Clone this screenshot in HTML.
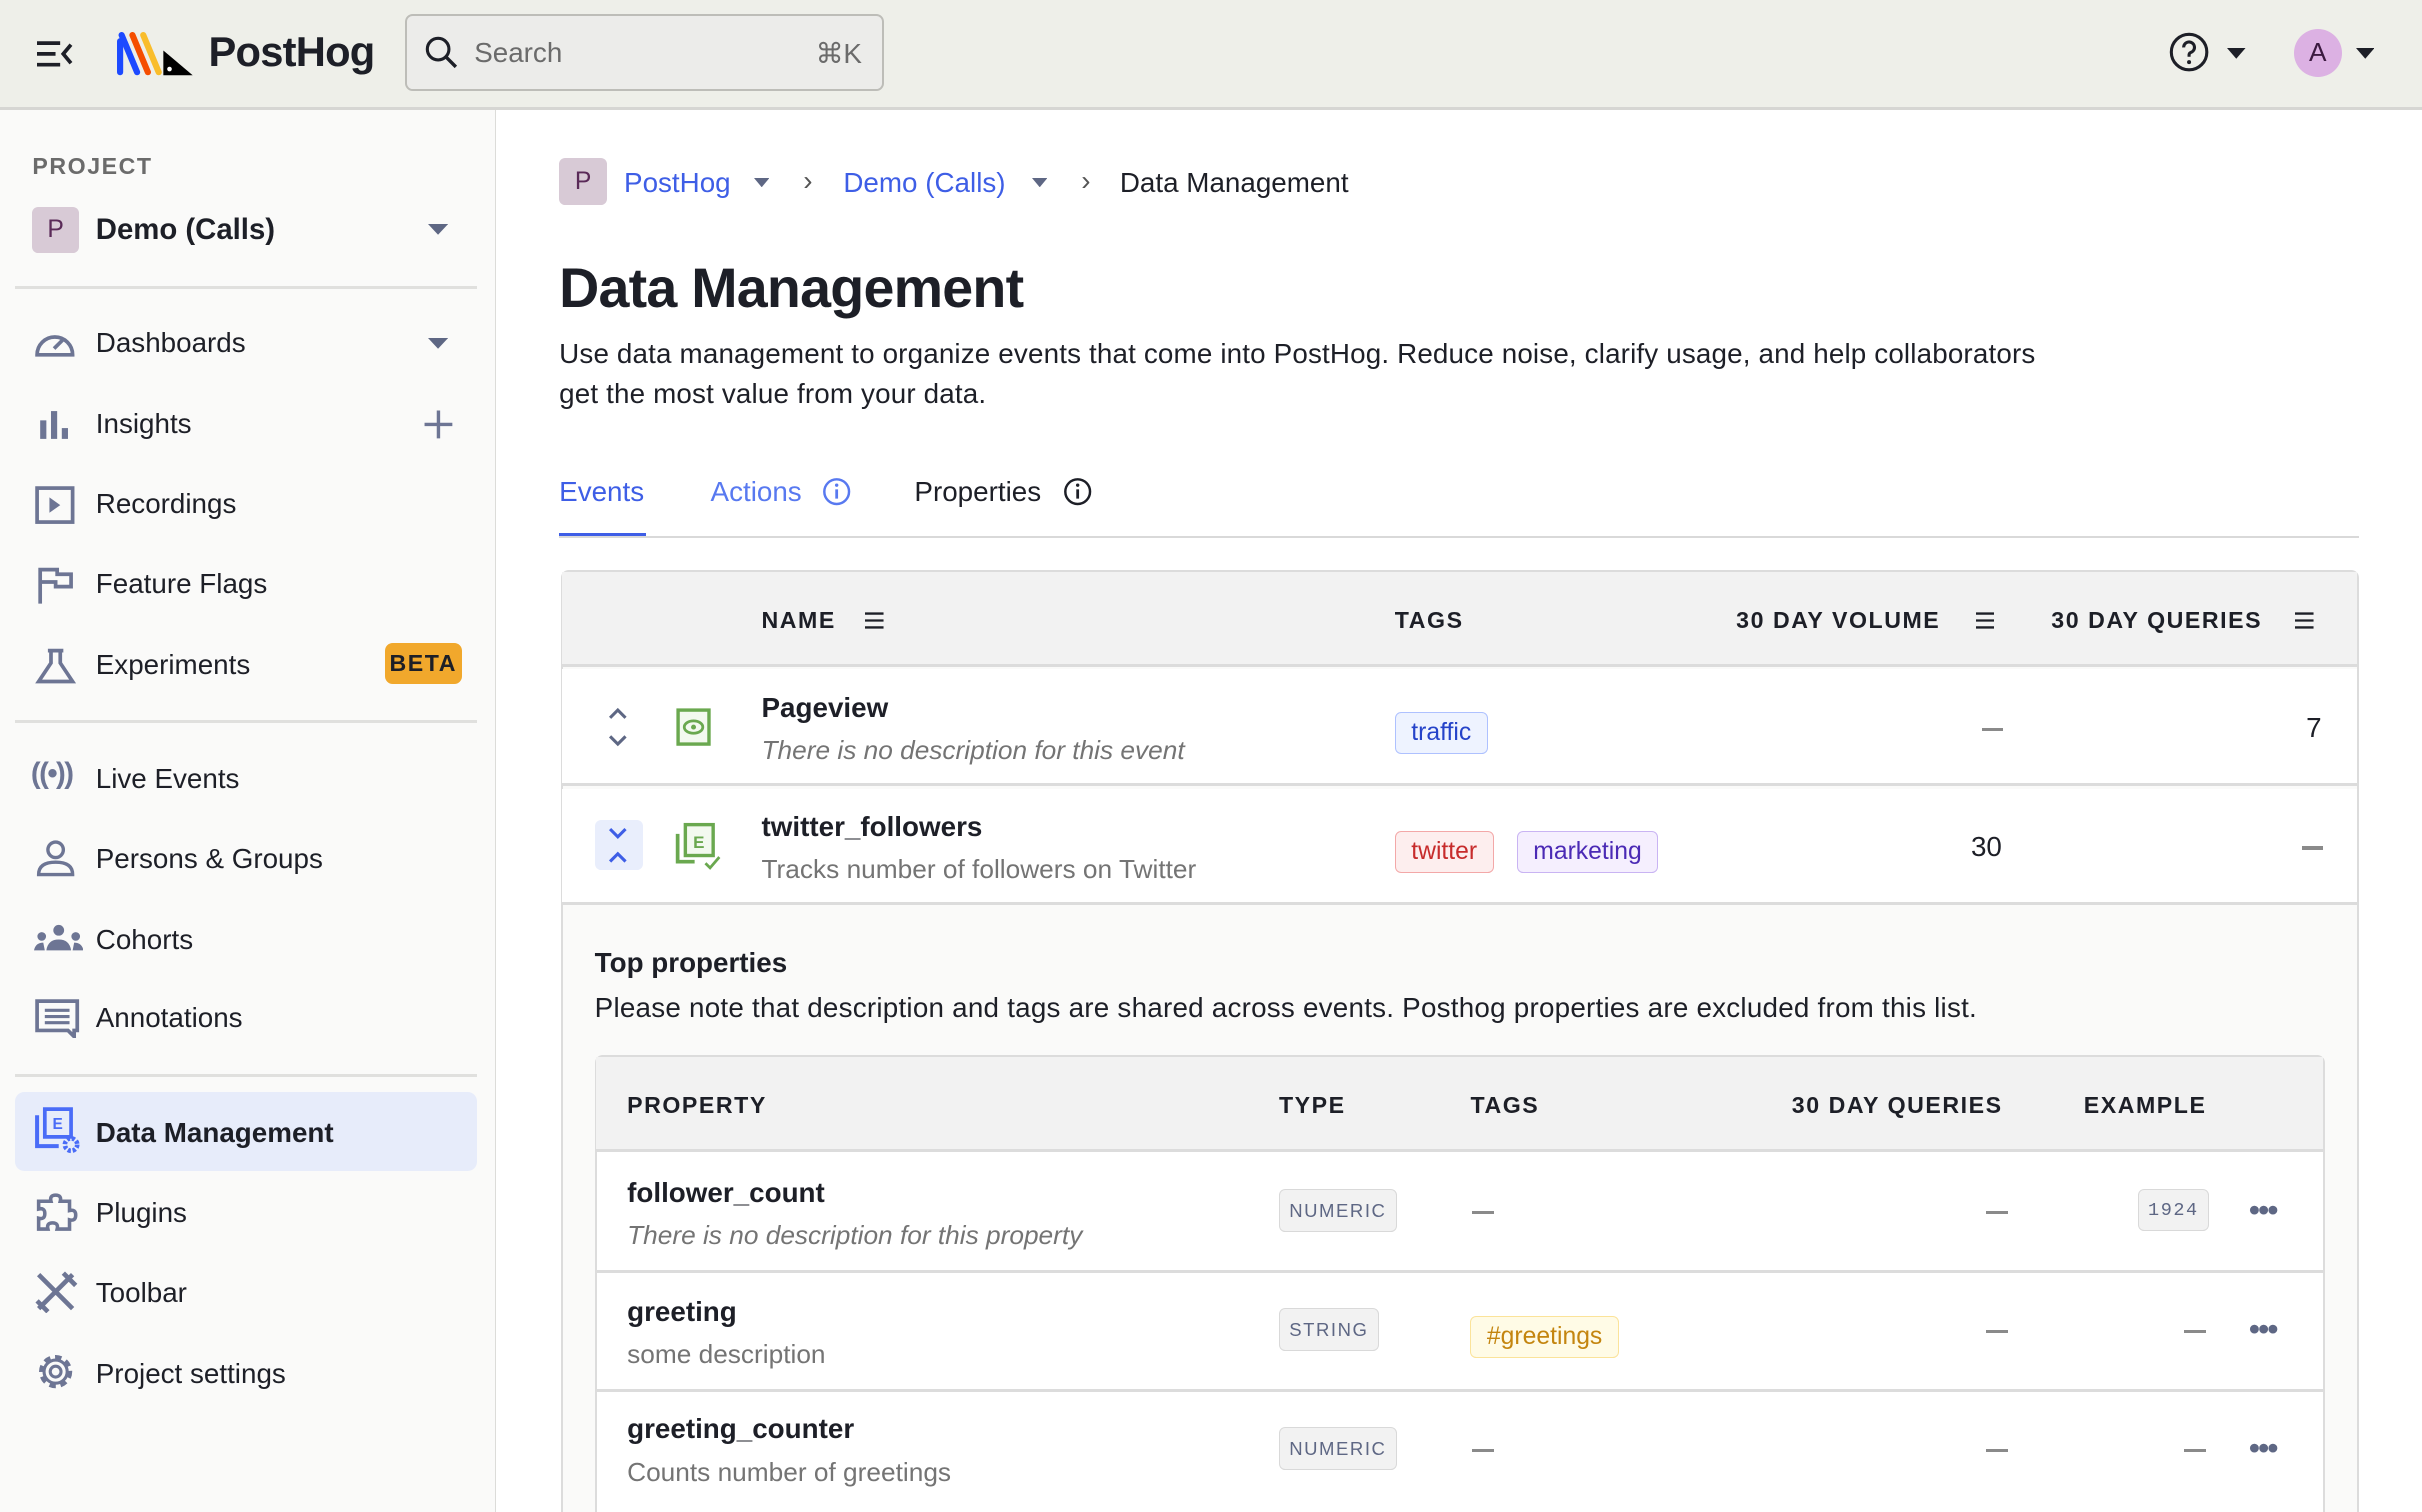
<!DOCTYPE html>
<html><head><meta charset="utf-8"><style>
*{box-sizing:border-box;margin:0;padding:0}
html,body{width:2422px;height:1512px;overflow:hidden;background:#fff}
#r{position:absolute;left:0;top:0;width:1568px;height:979px;zoom:1.54464;font-family:"Liberation Sans",sans-serif;color:#1d1f27;overflow:hidden}
.a{position:absolute}
.top{left:0;top:0;width:1568px;height:71px;background:#eeefe9;border-bottom:2px solid #d6d6d3}
.side{left:0;top:71px;width:321px;height:908px;background:#fafaf9;border-right:1px solid #dcdcd9}
.nav{position:absolute;left:62px;font-size:18px;color:#1d1f27}
.ic{position:absolute;left:22px}
.hr{position:absolute;left:10px;width:299px;height:2px;background:#e0e0de}
.hd{font-size:15px;font-weight:bold;letter-spacing:1px;color:#1d1f27}
.tag{position:absolute;font-size:16px;padding:4px 10px;border-radius:4px;border:1px solid}
.mut{color:#747474}
.pill{position:absolute;font-size:12px;letter-spacing:1px;padding:6px 6px;border-radius:4px;border:1px solid #d9d9d9;background:#f2f2f2;color:#5e6784}
.dash{position:absolute;width:14px;height:2px;background:#8a8a8a}
.dots{position:absolute;font-size:20px;color:#5e6784;letter-spacing:-1px;font-weight:bold}
</style></head><body><div id="r">
<div class="a top"></div>
<svg class="a" style="left:24px;top:26px" width="24" height="18" viewBox="0 0 24 18"><path d="M0 2H15M0 9H12M0 16H15M22 3L17 9L22 15" stroke="#1d1f27" stroke-width="2.4" fill="none"/></svg>
<svg class="a" style="left:76px;top:21px" width="50" height="28" viewBox="0 0 50 28"><g stroke-width="4" stroke-linecap="round"><path d="M2 6L2 26" stroke="#1d4aff"/><path d="M3 2L13 26" stroke="#1d4aff"/><path d="M10 2L20 26" stroke="#f54e00"/><path d="M17 2L27 26" stroke="#f9bd2b"/></g><polygon points="30,12 30,28 49,28 36,17" fill="#000"/><circle cx="34" cy="24" r="1.5" fill="#fff"/></svg>
<div class="a" style="left:135px;top:18px;font-size:27px;font-weight:bold;letter-spacing:-0.5px">PostHog</div>
<div class="a" style="left:262px;top:9px;width:310px;height:50px;border:1.5px solid #bdbdb8;border-radius:5px;background:#ececea"></div>
<svg class="a" style="left:275px;top:23px" width="22" height="22" viewBox="0 0 22 22"><circle cx="8.5" cy="8.5" r="7" stroke="#1d1f27" stroke-width="2" fill="none"/><path d="M13.5 13.5L20 20" stroke="#1d1f27" stroke-width="2.2"/></svg>
<div class="a" style="left:307px;top:24px;font-size:18px;color:#6b6b6b">Search</div>
<div class="a" style="left:528px;top:24px;font-size:18px;color:#6b6b6b">⌘K</div>
<svg class="a" style="left:1404px;top:21px" width="28" height="28" viewBox="0 0 28 28"><circle cx="13" cy="13" r="11.5" stroke="#1d1f27" stroke-width="2" fill="none"/><path d="M9.5 10a3.5 3.5 0 1 1 4.5 3.3c-.8.3-1 .8-1 1.7v1" stroke="#1d1f27" stroke-width="2" fill="none"/><circle cx="13" cy="19.5" r="1.3" fill="#1d1f27"/></svg>
<svg class="a" style="left:1442px;top:31px" width="12" height="8"><path d="M0 0H12L6 7Z" fill="#1d1f27"/></svg>
<div class="a" style="left:1485px;top:19px;width:31px;height:31px;border-radius:50%;background:#dcb1e3;font-size:17px;text-align:center;line-height:31px;color:#3b1a40">A</div>
<svg class="a" style="left:1525px;top:31px" width="12" height="8"><path d="M0 0H12L6 7Z" fill="#1d1f27"/></svg>

<div class="a side"></div>
<div class="a" style="left:21px;top:99px;font-size:15px;letter-spacing:1px;color:#6b6b6b;font-weight:bold">PROJECT</div>
<div class="a" style="left:21px;top:134px;width:30px;height:30px;border-radius:4px;background:#d8cad6;color:#5a2a58;text-align:center;line-height:30px;font-size:16px">P</div>
<div class="a" style="left:62px;top:138px;font-size:19px;font-weight:bold">Demo (Calls)</div>
<svg class="a" style="left:277px;top:145px" width="13" height="8"><path d="M0 0H13L6.5 7Z" fill="#5e6784"/></svg>
<div class="hr" style="top:185px"></div>
<svg class="ic" style="top:212px" width="28" height="22" viewBox="0 0 28 22"><path d="M2 18A11 11 0 1 1 25 18Z" stroke="#6d7594" stroke-width="2.4" fill="none"/><path d="M13 14L19 8" stroke="#6d7594" stroke-width="2.4"/></svg>
<div class="nav" style="top:212px">Dashboards</div>
<svg class="a" style="left:277px;top:219px" width="13" height="8"><path d="M0 0H13L6.5 7Z" fill="#5e6784"/></svg>
<svg class="ic" style="top:264px" width="28" height="22"><rect x="4" y="8" width="4" height="12" fill="#6d7594"/><rect x="11" y="2" width="4" height="18" fill="#6d7594"/><rect x="18" y="13" width="4" height="7" fill="#6d7594"/></svg>
<div class="nav" style="top:264px">Insights</div>
<svg class="a" style="left:274px;top:265px" width="20" height="20"><path d="M10 1V19M1 10H19" stroke="#6d7594" stroke-width="2.2"/></svg>
<svg class="ic" style="top:314px" width="28" height="26"><rect x="2" y="2" width="23" height="22" stroke="#6d7594" stroke-width="2.4" fill="none"/><path d="M10 8L17 13L10 18Z" fill="#6d7594"/></svg>
<div class="nav" style="top:316px">Recordings</div>
<svg class="ic" style="top:366px" width="28" height="26"><path d="M4 25V3H15V6H24V14H14V11H4" stroke="#6d7594" stroke-width="2.4" fill="none"/></svg>
<div class="nav" style="top:368px">Feature Flags</div>
<svg class="ic" style="top:418px" width="28" height="26"><path d="M9 3H19M11 3V11L3 23H25L17 11V3" stroke="#6d7594" stroke-width="2.4" fill="none"/></svg>
<div class="nav" style="top:420px">Experiments</div>
<div class="a" style="left:249px;top:416px;width:50px;height:27px;border-radius:5px;background:#f1a82c;font-size:15px;font-weight:bold;letter-spacing:1px;text-align:center;line-height:27px;color:#1d1f27">BETA</div>
<div class="hr" style="top:466px"></div>
<div class="a" style="left:20px;top:490px;font-size:19px;color:#6d7594;font-weight:bold;letter-spacing:-1px">((•))</div>
<div class="nav" style="top:494px">Live Events</div>
<svg class="ic" style="top:543px" width="28" height="26"><circle cx="14" cy="7" r="5" stroke="#6d7594" stroke-width="2.2" fill="none"/><path d="M3 23Q3 15 14 15Q25 15 25 23Z" stroke="#6d7594" stroke-width="2.2" fill="none"/></svg>
<div class="nav" style="top:546px">Persons &amp; Groups</div>
<svg class="ic" style="top:596px" width="32" height="22"><circle cx="16" cy="6" r="3.5" fill="#6d7594"/><circle cx="5" cy="10" r="2.8" fill="#6d7594"/><circle cx="27" cy="10" r="2.8" fill="#6d7594"/><path d="M8 19Q9 12 16 12Q23 12 24 19ZM0 19Q1 14 6 14L7 19ZM32 19Q31 14 26 14L25 19Z" fill="#6d7594"/></svg>
<div class="nav" style="top:598px">Cohorts</div>
<svg class="ic" style="top:646px" width="30" height="26"><path d="M2 2H28V21H26V25L22 21H2Z" stroke="#6d7594" stroke-width="2.4" fill="none"/><path d="M7 8H23M7 12H23M7 16H23" stroke="#6d7594" stroke-width="2"/></svg>
<div class="nav" style="top:649px">Annotations</div>
<div class="hr" style="top:695px"></div>
<div class="a" style="left:10px;top:707px;width:299px;height:51px;border-radius:6px;background:#e7ecfa"></div>
<svg class="ic" style="top:716px" width="32" height="32" viewBox="0 0 32 32"><path d="M2 6V26H16" stroke="#4a6cf7" stroke-width="2.6" fill="none"/><path d="M7 2H24V20H7Z" stroke="#4a6cf7" stroke-width="2.4" fill="none"/><text x="12" y="15" font-size="10" font-weight="bold" fill="#4a6cf7" font-family="Liberation Sans">E</text><circle cx="24" cy="25" r="4" stroke="#4a6cf7" stroke-width="3" fill="none" stroke-dasharray="2 1.2"/></svg>
<div class="nav" style="top:723px;font-weight:bold">Data Management</div>
<svg class="ic" style="top:772px" width="30" height="28"><path d="M3 6H11Q10 2 14 2Q18 2 17 6H23V12Q27 11 27 15Q27 19 23 18V24H15Q16 20 12 20Q8 20 9 24H3V17Q7 18 7 14Q7 10 3 11Z" stroke="#6d7594" stroke-width="2.3" fill="none"/></svg>
<div class="nav" style="top:775px">Plugins</div>
<svg class="ic" style="top:822px" width="30" height="28"><path d="M3 3L25 25M25 3L3 25M19 2L27 10M2 20L9 27" stroke="#6d7594" stroke-width="3" fill="none"/></svg>
<div class="nav" style="top:827px">Toolbar</div>
<svg class="ic" style="top:874px" width="28" height="28" viewBox="0 0 28 28"><circle cx="14" cy="14" r="9" stroke="#6d7594" stroke-width="3.5" fill="none" stroke-dasharray="4 3"/><circle cx="14" cy="14" r="7.5" stroke="#6d7594" stroke-width="2" fill="none"/><circle cx="14" cy="14" r="3.5" stroke="#6d7594" stroke-width="2" fill="none"/></svg>
<div class="nav" style="top:879px">Project settings</div>

<!-- main -->
<div class="a" style="left:362px;top:102px;width:31px;height:31px;border-radius:4px;background:#d8cad6;color:#5a2a58;text-align:center;line-height:31px;font-size:16px">P</div>
<div class="a" style="left:404px;top:108px;font-size:18px;color:#3e5ee6">PostHog</div>
<svg class="a" style="left:488px;top:115px" width="10" height="6"><path d="M0 0H10L5 6Z" fill="#5e6784"/></svg>
<div class="a" style="left:520px;top:107px;font-size:18px;color:#555">›</div>
<div class="a" style="left:546px;top:108px;font-size:18px;color:#3e5ee6">Demo (Calls)</div>
<svg class="a" style="left:668px;top:115px" width="10" height="6"><path d="M0 0H10L5 6Z" fill="#5e6784"/></svg>
<div class="a" style="left:700px;top:107px;font-size:18px;color:#555">›</div>
<div class="a" style="left:725px;top:108px;font-size:18px">Data Management</div>
<div class="a" style="left:362px;top:166px;font-size:36px;font-weight:bold;letter-spacing:-0.5px">Data Management</div>
<div class="a" style="left:362px;top:216px;width:960px;font-size:18px;line-height:26px;letter-spacing:0.1px;color:#1d1f27">Use data management to organize events that come into PostHog. Reduce noise, clarify usage, and help collaborators get the most value from your data.</div>
<div class="a" style="left:362px;top:308px;font-size:18px;color:#3e5ee6">Events</div>
<div class="a" style="left:362px;top:345px;width:56px;height:3px;background:#3e5ee6"></div>
<div class="a" style="left:460px;top:308px;font-size:18px;color:#5879f0">Actions</div>
<svg class="a" style="left:532px;top:309px" width="19" height="19"><circle cx="9.5" cy="9.5" r="8" stroke="#5879f0" stroke-width="1.6" fill="none"/><path d="M9.5 8V14" stroke="#5879f0" stroke-width="1.8"/><circle cx="9.5" cy="5.3" r="1.1" fill="#5879f0"/></svg>
<div class="a" style="left:592px;top:308px;font-size:18px">Properties</div>
<svg class="a" style="left:688px;top:309px" width="19" height="19"><circle cx="9.5" cy="9.5" r="8" stroke="#1d1f27" stroke-width="1.6" fill="none"/><path d="M9.5 8V14" stroke="#1d1f27" stroke-width="1.8"/><circle cx="9.5" cy="5.3" r="1.1" fill="#1d1f27"/></svg>
<div class="a" style="left:362px;top:347px;width:1165px;height:1px;background:#d9d9d9"></div>

<div class="a" style="left:363px;top:369px;width:1164px;height:620px;border:1.5px solid #dcdcdc;border-radius:5px;background:#fafaf9"></div>
<div class="a" style="left:364px;top:370px;width:1162px;height:62px;background:#f2f2f2;border-bottom:2px solid #dcdcdc"></div>
<div class="a hd" style="left:493px;top:393px">NAME</div>
<svg class="a" style="left:560px;top:396px" width="12" height="11"><path d="M0 1H12M0 5.5H12M0 10H12" stroke="#1d1f27" stroke-width="1.5"/></svg>
<div class="a hd" style="left:903px;top:393px">TAGS</div>
<div class="a hd" style="left:1124px;top:393px">30 DAY VOLUME</div>
<svg class="a" style="left:1279px;top:396px" width="12" height="11"><path d="M0 1H12M0 5.5H12M0 10H12" stroke="#1d1f27" stroke-width="1.5"/></svg>
<div class="a hd" style="left:1328px;top:393px">30 DAY QUERIES</div>
<svg class="a" style="left:1486px;top:396px" width="12" height="11"><path d="M0 1H12M0 5.5H12M0 10H12" stroke="#1d1f27" stroke-width="1.5"/></svg>
<div class="a" style="left:364px;top:433px;width:1162px;height:76px;background:#fff;border-bottom:2px solid #dcdcdc"></div>
<svg class="a" style="left:393px;top:458px" width="14" height="26"><path d="M2 7L7 2L12 7M2 19L7 24L12 19" stroke="#5e6784" stroke-width="2" fill="none"/></svg>
<svg class="a" style="left:437px;top:458px" width="24" height="26"><rect x="2" y="2" width="20" height="22" stroke="#6aa84f" stroke-width="2.2" fill="#f3f9ef"/><ellipse cx="12" cy="13" rx="6" ry="4" stroke="#6aa84f" stroke-width="1.8" fill="none"/><circle cx="12" cy="13" r="1.6" fill="#6aa84f"/></svg>
<div class="a" style="left:493px;top:448px;font-size:18px;font-weight:bold">Pageview</div>
<div class="a mut" style="left:493px;top:476px;font-size:17px;font-style:italic">There is no description for this event</div>
<div class="tag" style="left:903px;top:461px;color:#2543c9;border-color:#aec1ff;background:#eef3ff">traffic</div>
<div class="dash" style="left:1283px;top:471px"></div>
<div class="a" style="left:1493px;top:461px;font-size:18px">7</div>
<div class="a" style="left:364px;top:511px;width:1162px;height:75px;background:#fff;border-bottom:2px solid #dcdcdc"></div>
<div class="a" style="left:385px;top:531px;width:31px;height:32px;border-radius:4px;background:#e9eefc"></div>
<svg class="a" style="left:393px;top:535px" width="14" height="26"><path d="M2 2L7 7L12 2M2 23L7 18L12 23" stroke="#3e5ee6" stroke-width="2" fill="none"/></svg>
<svg class="a" style="left:436px;top:531px" width="34" height="34"><path d="M3 9V27H14" stroke="#6aa84f" stroke-width="2.4" fill="none"/><rect x="8" y="3" width="18" height="20" stroke="#6aa84f" stroke-width="2.2" fill="#f3f9ef"/><text x="13" y="18" font-size="11" font-weight="bold" fill="#6aa84f" font-family="Liberation Sans">E</text><path d="M21 28L24 31L30 24" stroke="#6aa84f" stroke-width="1.8" fill="none"/></svg>
<div class="a" style="left:493px;top:525px;font-size:18px;font-weight:bold">twitter_followers</div>
<div class="a mut" style="left:493px;top:553px;font-size:17px">Tracks number of followers on Twitter</div>
<div class="tag" style="left:903px;top:538px;color:#c72c2c;border-color:#f3a8a8;background:#fdeeee">twitter</div>
<div class="tag" style="left:982px;top:538px;color:#4b2ab5;border-color:#c9b4f3;background:#f5effe">marketing</div>
<div class="a" style="left:1276px;top:538px;font-size:18px">30</div>
<div class="dash" style="left:1490px;top:548px"></div>

<div class="a" style="left:385px;top:613px;font-size:18px;font-weight:bold">Top properties</div>
<div class="a" style="left:385px;top:642px;font-size:18px;letter-spacing:0.15px">Please note that description and tags are shared across events. Posthog properties are excluded from this list.</div>
<div class="a" style="left:385px;top:683px;width:1120px;height:320px;border:1.5px solid #dcdcdc;border-radius:5px;background:#fff"></div>
<div class="a" style="left:386px;top:684px;width:1118px;height:62px;background:#f2f2f2;border-bottom:2px solid #dcdcdc"></div>
<div class="a hd" style="left:406px;top:707px">PROPERTY</div>
<div class="a hd" style="left:828px;top:707px">TYPE</div>
<div class="a hd" style="left:952px;top:707px">TAGS</div>
<div class="a hd" style="left:1160px;top:707px">30 DAY QUERIES</div>
<div class="a hd" style="left:1349px;top:707px">EXAMPLE</div>
<div class="a" style="left:386px;top:822px;width:1118px;height:2px;background:#dcdcdc"></div>
<div class="a" style="left:386px;top:899px;width:1118px;height:2px;background:#dcdcdc"></div>
<div class="a" style="left:406px;top:762px;font-size:18px;font-weight:bold">follower_count</div>
<div class="a mut" style="left:406px;top:790px;font-size:17px;font-style:italic">There is no description for this property</div>
<div class="pill" style="left:828px;top:770px">NUMERIC</div>
<div class="dash" style="left:953px;top:784px"></div>
<div class="dash" style="left:1286px;top:784px"></div>
<div class="pill" style="left:1384px;top:770px;font-family:'Liberation Mono',monospace">1924</div>
<div class="dots" style="left:1456px;top:772px">•••</div>
<div class="a" style="left:406px;top:839px;font-size:18px;font-weight:bold">greeting</div>
<div class="a mut" style="left:406px;top:867px;font-size:17px">some description</div>
<div class="pill" style="left:828px;top:847px">STRING</div>
<div class="tag" style="left:952px;top:852px;color:#c4850f;border-color:#fbe39a;background:#fffbe6">#greetings</div>
<div class="dash" style="left:1286px;top:861px"></div>
<div class="dash" style="left:1414px;top:861px"></div>
<div class="dots" style="left:1456px;top:849px">•••</div>
<div class="a" style="left:406px;top:915px;font-size:18px;font-weight:bold">greeting_counter</div>
<div class="a mut" style="left:406px;top:943px;font-size:17px">Counts number of greetings</div>
<div class="pill" style="left:828px;top:924px">NUMERIC</div>
<div class="dash" style="left:953px;top:938px"></div>
<div class="dash" style="left:1286px;top:938px"></div>
<div class="dash" style="left:1414px;top:938px"></div>
<div class="dots" style="left:1456px;top:926px">•••</div>
</div></body></html>
